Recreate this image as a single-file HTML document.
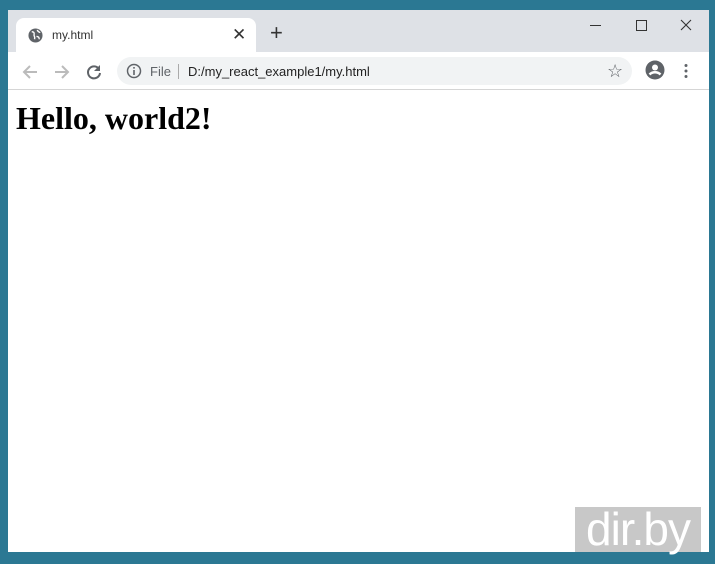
<!DOCTYPE html>
<html><head><style>
body{margin:0;width:715px;height:564px;background:#2b7893;position:relative;overflow:hidden;font-family:"Liberation Sans",sans-serif}
.win{position:absolute;left:8px;top:10px;width:701px;height:542px;background:#fff}
.strip{position:absolute;left:0;top:0;width:701px;height:42px;background:#dee1e6}
.tab{position:absolute;left:8px;top:8px;width:240px;height:34px;background:#fff;border-radius:8px 8px 0 0}
.tb{position:absolute;left:0;top:42px;width:701px;height:37px;background:#fff;border-bottom:1px solid #d5d5d5}
.omni{position:absolute;left:109px;top:5px;width:515px;height:28px;background:#f1f3f4;border-radius:14px}
.t{position:absolute;font-size:13px;color:#333}
h1{position:absolute;left:8px;top:90px;margin:0;font:bold 32px "Liberation Serif",serif;color:#000}
.wm{position:absolute;left:575px;top:507px;width:126px;height:45px;background:#c8c8c8;color:#fff;font-size:46px;line-height:44px;text-align:center;letter-spacing:-1px}
</style></head><body>
<div class="win">
<div class="strip">
<div class="tab">
<svg style="position:absolute;left:12px;top:10px" width="15" height="15" viewBox="0 0 16 16"><circle cx="8" cy="8" r="7.5" fill="#5f6368"/><path d="M4 4c2 0 3 1 2.5 3S8 9 7 12M10 2c0 2 2 2 3 3M9 9c2 0 3 1 3 3" stroke="#fff" stroke-width="1.5" fill="none"/></svg>
<div class="t" style="left:36px;top:10px;font-size:12px">my.html</div>
<div class="t" style="left:216px;top:7px;font-size:17px;color:#333">✕</div>
</div>
<div class="t" style="left:262px;top:12px;font-size:22px;line-height:22px;color:#333">+</div>
<div style="position:absolute;left:582px;top:15px;width:11px;height:1px;background:#333"></div>
<div style="position:absolute;left:628px;top:10px;width:9px;height:9px;border:1px solid #333"></div>
<svg style="position:absolute;left:672px;top:9px" width="12" height="12"><path d="M1 1L11 11M11 1L1 11" stroke="#333" stroke-width="1.1"/></svg>
</div>
<div class="tb">
<svg style="position:absolute;left:13px;top:11px" width="18" height="18" viewBox="0 0 18 18"><path d="M16 9H3M9 3L3 9l6 6" stroke="#bbb" stroke-width="2" fill="none"/></svg>
<svg style="position:absolute;left:45px;top:11px" width="18" height="18" viewBox="0 0 18 18"><path d="M2 9h13M9 3l6 6-6 6" stroke="#bbb" stroke-width="2" fill="none"/></svg>
<svg style="position:absolute;left:77px;top:11px" width="18" height="18" viewBox="0 0 18 18"><path d="M14 6A6 6 0 1 0 15 10" stroke="#5f6368" stroke-width="2" fill="none"/><path d="M15 2v6H9z" fill="#5f6368"/></svg>
<div class="omni">
<svg style="position:absolute;left:9px;top:6px" width="16" height="16" viewBox="0 0 16 16"><circle cx="8" cy="8" r="6.5" stroke="#5f6368" stroke-width="1.5" fill="none"/><path d="M8 7v5M8 4v1.6" stroke="#5f6368" stroke-width="1.6"/></svg>
<div class="t" style="left:33px;top:7px;color:#5f6368">File</div>
<div style="position:absolute;left:61px;top:7px;width:1px;height:15px;background:#aaa"></div>
<div class="t" style="left:71px;top:7px;color:#222">D:/my_react_example1/my.html</div>
<div class="t" style="left:490px;top:4px;font-size:18px;color:#5f6368">☆</div>
</div>
<svg style="position:absolute;left:637px;top:8px" width="20" height="20" viewBox="0 0 20 20"><circle cx="10" cy="10" r="9.5" fill="#5f6368"/><circle cx="10" cy="7.5" r="3" fill="#fff"/><path d="M4.5 14.5c3-3 8-3 11 0" stroke="#fff" stroke-width="2.5" fill="none"/></svg>
<svg style="position:absolute;left:676px;top:11px" width="4" height="16"><circle cx="2" cy="2.5" r="1.5" fill="#5f6368"/><circle cx="2" cy="8" r="1.5" fill="#5f6368"/><circle cx="2" cy="13.5" r="1.5" fill="#5f6368"/></svg>
</div>
<h1>Hello, world2!</h1>
</div>
<div class="wm">dir.by</div>
</body></html>
